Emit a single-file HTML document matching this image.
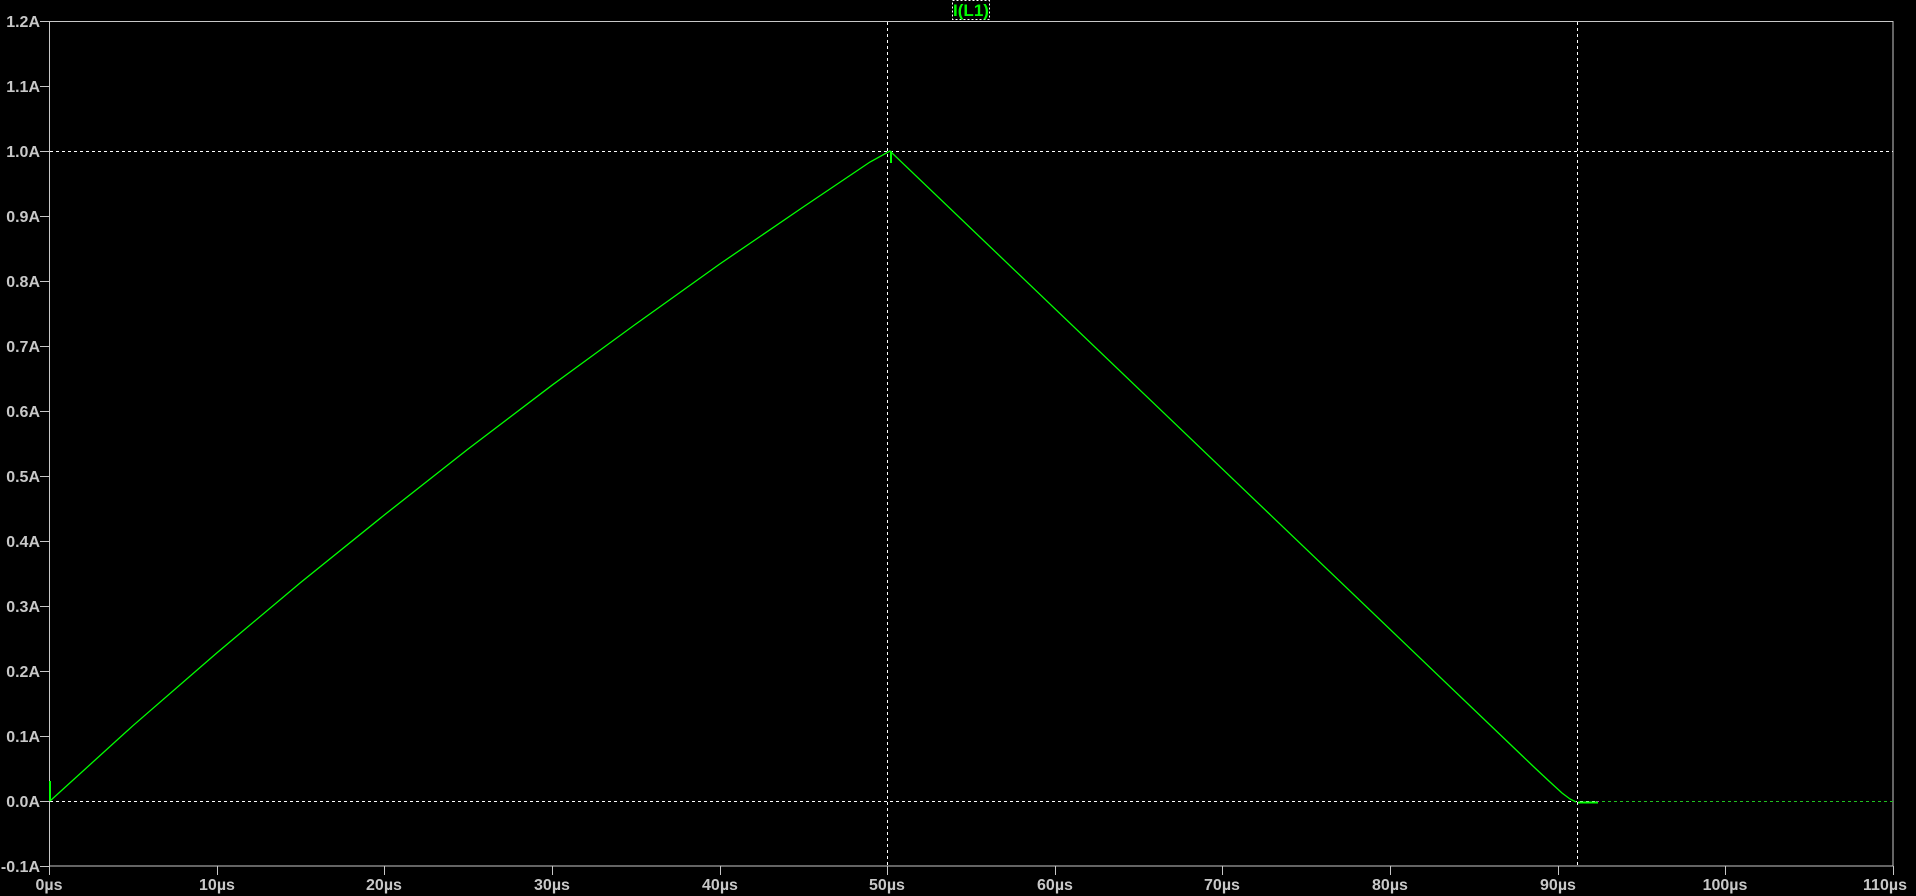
<!DOCTYPE html>
<html><head><style>
html,body{margin:0;padding:0;background:#000;width:1916px;height:896px;overflow:hidden}
svg{display:block}
text{font-family:"Liberation Sans",sans-serif;font-weight:bold;font-size:16px;fill:#c8c8c8}
</style></head><body>
<svg width="1916" height="896" xmlns="http://www.w3.org/2000/svg">
<rect width="1916" height="896" fill="#000"/>
<rect x="49.5" y="21.5" width="1843.5" height="844.5" fill="none" stroke="#c8c8c8" stroke-width="1"/>
<g stroke="#fff" stroke-width="1" stroke-dasharray="3,3">
<line x1="50" y1="151.5" x2="1893" y2="151.5"/>
<line x1="50" y1="801.5" x2="1596" y2="801.5"/>
<line x1="887.5" y1="22" x2="887.5" y2="866"/>
<line x1="1577.5" y1="22" x2="1577.5" y2="866"/>
</g>
<line x1="1596" y1="801.5" x2="1893" y2="801.5" stroke="#c040c0" stroke-width="1" stroke-dasharray="3,3"/>
<line x1="1599" y1="801.5" x2="1893" y2="801.5" stroke="#20c020" stroke-width="1" stroke-dasharray="3,3" stroke-dashoffset="3"/>
<g stroke="#c8c8c8">
<line x1="40" y1="21.5" x2="49" y2="21.5"/><line x1="40" y1="86.5" x2="49" y2="86.5"/><line x1="40" y1="151.5" x2="49" y2="151.5"/><line x1="40" y1="216.5" x2="49" y2="216.5"/><line x1="40" y1="281.5" x2="49" y2="281.5"/><line x1="40" y1="346.5" x2="49" y2="346.5"/><line x1="40" y1="411.5" x2="49" y2="411.5"/><line x1="40" y1="476.5" x2="49" y2="476.5"/><line x1="40" y1="541.5" x2="49" y2="541.5"/><line x1="40" y1="606.5" x2="49" y2="606.5"/><line x1="40" y1="671.5" x2="49" y2="671.5"/><line x1="40" y1="736.5" x2="49" y2="736.5"/><line x1="40" y1="801.5" x2="49" y2="801.5"/><line x1="40" y1="866.5" x2="49" y2="866.5"/>
<line x1="49.5" y1="866" x2="49.5" y2="875"/><line x1="217.5" y1="866" x2="217.5" y2="875"/><line x1="384.5" y1="866" x2="384.5" y2="875"/><line x1="552.5" y1="866" x2="552.5" y2="875"/><line x1="720.5" y1="866" x2="720.5" y2="875"/><line x1="887.5" y1="866" x2="887.5" y2="875"/><line x1="1055.5" y1="866" x2="1055.5" y2="875"/><line x1="1222.5" y1="866" x2="1222.5" y2="875"/><line x1="1390.5" y1="866" x2="1390.5" y2="875"/><line x1="1558.5" y1="866" x2="1558.5" y2="875"/><line x1="1725.5" y1="866" x2="1725.5" y2="875"/><line x1="1893.5" y1="866" x2="1893.5" y2="875"/>
</g>
<g text-anchor="end">
<text x="40" y="27">1.2A</text><text x="40" y="92">1.1A</text><text x="40" y="157">1.0A</text><text x="40" y="222">0.9A</text><text x="40" y="287">0.8A</text><text x="40" y="352">0.7A</text><text x="40" y="417">0.6A</text><text x="40" y="482">0.5A</text><text x="40" y="547">0.4A</text><text x="40" y="612">0.3A</text><text x="40" y="677">0.2A</text><text x="40" y="742">0.1A</text><text x="40" y="807">0.0A</text><text x="40" y="872">-0.1A</text>
</g>
<g text-anchor="middle">
<text x="49" y="890">0µs</text><text x="217" y="890">10µs</text><text x="384" y="890">20µs</text><text x="552" y="890">30µs</text><text x="720" y="890">40µs</text><text x="887" y="890">50µs</text><text x="1055" y="890">60µs</text><text x="1222" y="890">70µs</text><text x="1390" y="890">80µs</text><text x="1558" y="890">90µs</text><text x="1725" y="890">100µs</text><text x="1885" y="890">110µs</text>
</g>
<g stroke="#00ff00" fill="none" stroke-width="1.3">
<polyline points="50,801 132.8,725.8 216.6,653.1 300.5,582.6 384.3,515 468.1,449 551.9,385.3 635.7,324.1 719.6,264.1 803.4,206.9 870,162 890,151 1535,768 1550,782 1562,793 1570,799 1576,802"/>
<line x1="50" y1="781" x2="50" y2="801" stroke-width="2"/>
<line x1="891" y1="151" x2="891" y2="163" stroke-width="2"/>
<line x1="1578" y1="802.5" x2="1598" y2="802.5" stroke-width="2"/>
</g>
<rect x="952.5" y="0.5" width="37" height="19" fill="none" stroke="#fff" stroke-dasharray="2,2"/>
<text x="971" y="16" text-anchor="middle" style="fill:#00ff00;font-size:17px">I(L1)</text>
</svg>
</body></html>
